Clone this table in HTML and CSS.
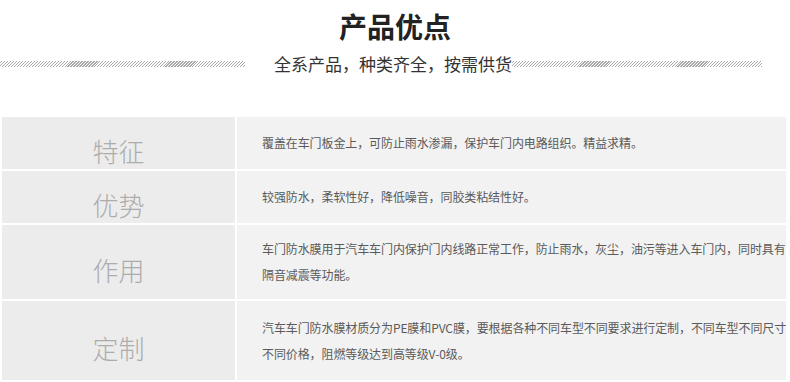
FILE: index.html
```html
<!DOCTYPE html>
<html lang="zh-CN">
<head>
<meta charset="utf-8">
<title>产品优点</title>
<link rel="stylesheet" href="styles.css">
</head>
<body>
<header class="head">
  <h1 class="title">产品优点</h1>
  <div class="sub-row">
    <span class="hatch hatch-left"></span>
    <p class="subtitle">全系产品，种类齐全，按需供货</p>
    <span class="hatch hatch-right"></span>
  </div>
</header>
<section class="table">
  <div class="label row-s">特征</div>
  <div class="desc row-s">覆盖在车门板金上，可防止雨水渗漏，保护车门内电路组织。精益求精。</div>
  <div class="label row-s">优势</div>
  <div class="desc row-s">较强防水，柔软性好，降低噪音，同胶类粘结性好。</div>
  <div class="label row-m">作用</div>
  <div class="desc row-m">车门防水膜用于汽车车门内保护门内线路正常工作，防止雨水，灰尘，油污等进入车门内，同时具有<br>隔音减震等功能。</div>
  <div class="label row-l">定制</div>
  <div class="desc row-l">汽车车门防水膜材质分为PE膜和PVC膜，要根据各种不同车型不同要求进行定制，不同车型不同尺寸<br>不同价格，阻燃等级达到高等级V-0级。</div>
</section>
</body>
</html>
```

FILE: styles.css
```css
html, body {
  margin: 0;
  padding: 0;
  background: #ffffff;
}
body {
  width: 790px;
  font-family: "Microsoft YaHei", "Noto Sans CJK SC", sans-serif;
}
.head {
  padding-top: 9px;
  height: 108px;
  box-sizing: border-box;
}
.title {
  margin: 0;
  text-align: center;
  font-size: 28px;
  line-height: 34px;
  font-weight: 700;
  color: #222222;
}
.sub-row {
  display: flex;
  align-items: center;
  margin-top: 9px;
  height: 24px;
}
.hatch {
  display: block;
  height: 6px;
  background: repeating-linear-gradient(135deg, transparent 0, transparent 1.2px, #a8a8a8 1.2px, #a8a8a8 2.1px);
}
.hatch-left {
  width: 245px;
  margin-right: 29px;
}
.hatch-right {
  width: 250px;
}
.subtitle {
  margin: 0;
  font-size: 17px;
  line-height: 24px;
  color: #333333;
  white-space: nowrap;
  width: 238px;
}
.table {
  margin-top: 9px;
  margin-left: 2px;
  width: 784px;
  display: grid;
  grid-template-columns: 233px 549px;
  column-gap: 2px;
  row-gap: 2px;
  background: #ffffff;
}
.row-s { height: 52px; }
.row-m { height: 74px; }
.row-l { height: 79px; }
.label {
  background: #ececec;
  color: #acacac;
  font-size: 26px;
  font-weight: 300;
  display: flex;
  align-items: center;
  justify-content: center;
  padding-top: 14px;
  box-sizing: border-box;
}
.desc {
  background: #f2f2f2;
  color: #5a5a5a;
  font-size: 12px;
  line-height: 26px;
  letter-spacing: -0.1px;
  display: flex;
  align-items: center;
  padding-left: 25px;
  box-sizing: border-box;
  white-space: nowrap;
}
```
